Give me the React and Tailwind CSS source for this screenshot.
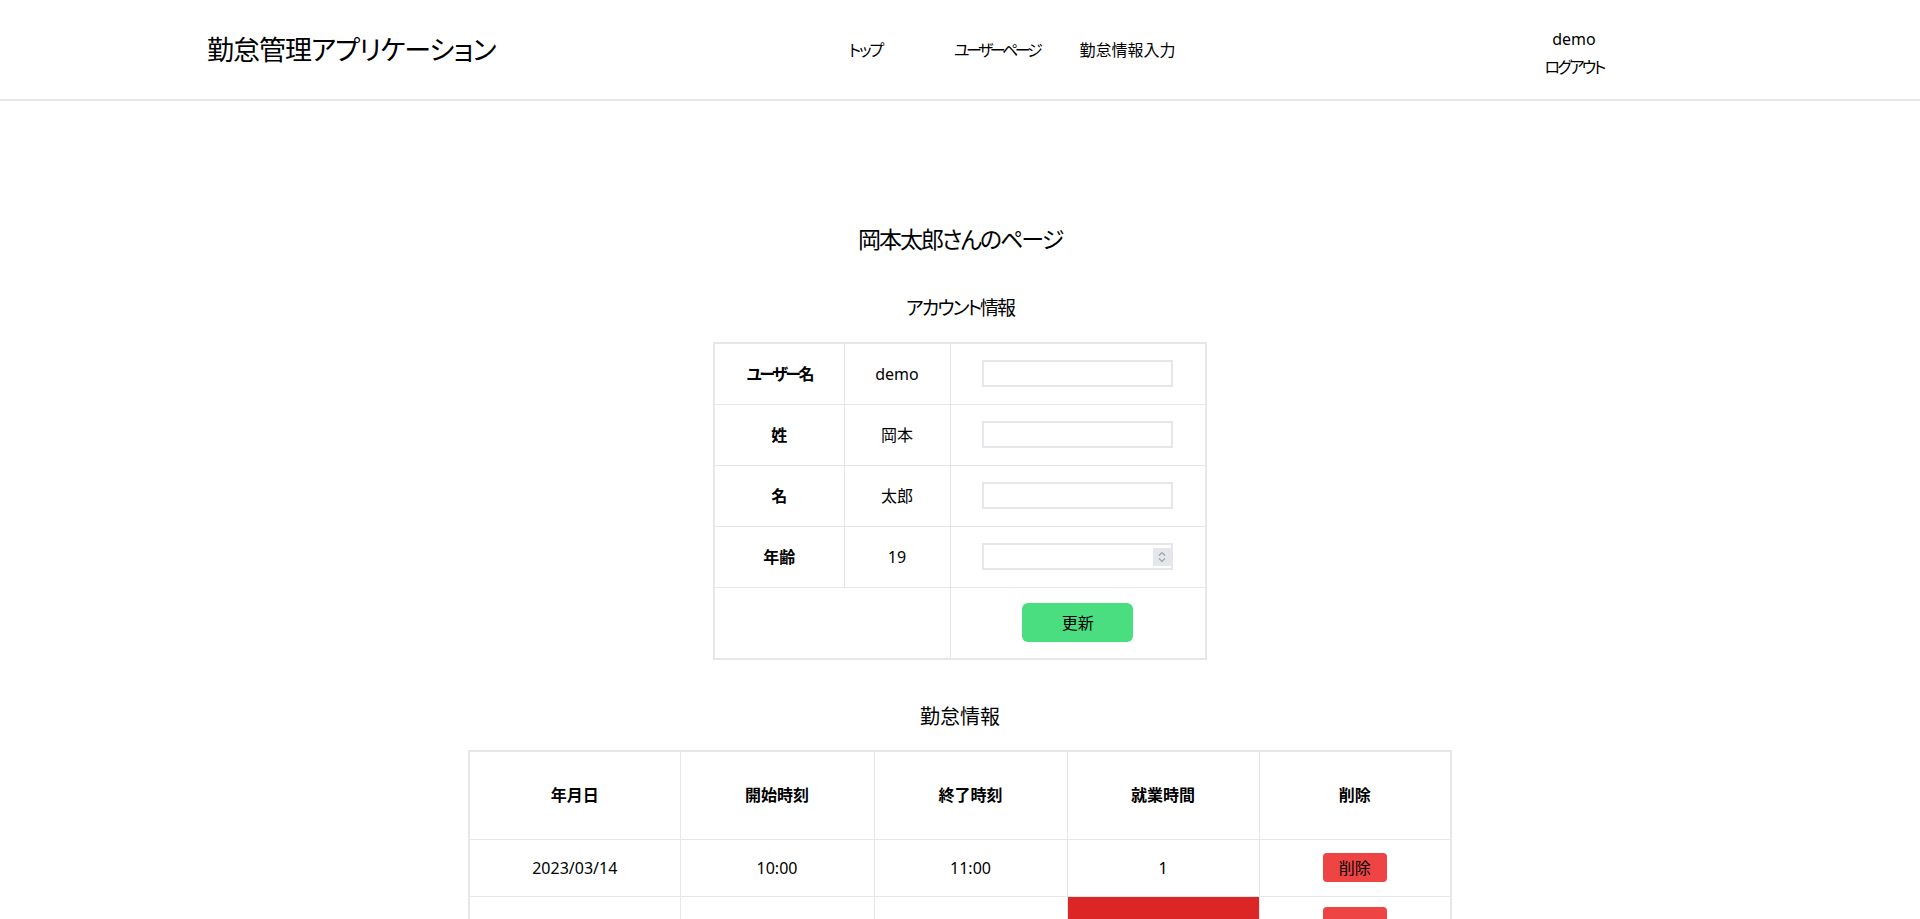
import React from 'react';

const font = "font-['Noto_Sans','Noto_Sans_CJK_JP',sans-serif] [font-feature-settings:'palt']";

const account = [
  { label: "ユーザー名", value: "demo", tight: true },
  { label: "姓", value: "岡本" },
  { label: "名", value: "太郎" },
  { label: "年齢", value: "19", number: true },
];

const records = [
  { date: "2023/03/14", start: "10:00", end: "11:00", hours: "1", over: false },
  { date: "", start: "", end: "", hours: "", over: true },
];

const Header = () => (
  <header className="h-[101px] border-b-2 border-gray-200 flex items-center pl-[207px]">
    <h1 className="w-[593px] text-[27px] tracking-[-1px] leading-none text-black">勤怠管理アプリケーション</h1>
    <nav className="flex w-[393px] text-base text-black">
      <a className="w-[131px] text-center tracking-[-2px]">トップ</a>
      <a className="w-[131px] text-center tracking-[-3.5px]">ユーザーページ</a>
      <a className="w-[131px] text-center">勤怠情報入力</a>
    </nav>
    <div className="ml-[317px] w-32 pt-[6px] text-center text-base leading-7 text-black">
      <div>demo</div>
      <div className="tracking-[-2.5px]">ログアウト</div>
    </div>
  </header>
);

const AccountTable = () => (
  <table className="mt-[20px] w-[494px] border-collapse border-2 border-gray-200 text-base text-black">
    <tbody>
      {account.map((row) => (
        <tr key={row.label} className="h-[61px]">
          <td className={row.tight ? "w-[130px] border border-gray-200 text-center font-bold tracking-[-2.5px]" : "w-[130px] border border-gray-200 text-center font-bold"}>{row.label}</td>
          <td className="w-[106px] border border-gray-200 text-center">{row.value}</td>
          <td className="border border-gray-200">
            <div className="relative mx-auto w-[191px]">
              <input type="text" className="block h-[27px] w-[191px] border-2 border-gray-200 px-1 outline-none" />
              {row.number && (
                <div className="absolute right-[2px] top-[5px] flex h-[18px] w-[18px] flex-col items-center justify-center bg-gray-200 text-gray-400">
                  <svg width="8" height="12" viewBox="0 0 8 12" fill="none" stroke="currentColor" strokeWidth="1.2">
                    <path d="M1 4.5 L4 1.5 L7 4.5" />
                    <path d="M1 7.5 L4 10.5 L7 7.5" />
                  </svg>
                </div>
              )}
            </div>
          </td>
        </tr>
      ))}
      <tr className="h-[72px]">
        <td colSpan={2} className="border border-gray-200"></td>
        <td className="border border-gray-200 text-center">
          <button className="h-[39px] w-[111px] rounded-md bg-[#4ade80] text-base text-black">更新</button>
        </td>
      </tr>
    </tbody>
  </table>
);

const AttendanceTable = () => (
  <table className="mt-[19px] w-[984px] border-collapse border-2 border-gray-200 text-base text-black">
    <thead>
      <tr className="h-[88px]">
        <th className="w-[211px] border border-gray-200 font-bold">年月日</th>
        <th className="w-[194px] border border-gray-200 font-bold">開始時刻</th>
        <th className="w-[193px] border border-gray-200 font-bold">終了時刻</th>
        <th className="w-[192px] border border-gray-200 font-bold">就業時間</th>
        <th className="border border-gray-200 font-bold">削除</th>
      </tr>
    </thead>
    <tbody>
      {records.map((r, i) => (
        <tr key={i} className="h-[57px]">
          <td className="border border-gray-200 text-center">{r.date}</td>
          <td className="border border-gray-200 text-center">{r.start}</td>
          <td className="border border-gray-200 text-center">{r.end}</td>
          <td className={r.over ? "border border-gray-200 bg-[#dc2626] text-center" : "border border-gray-200 text-center"}>{r.hours}</td>
          <td className="border border-gray-200 text-center">
            <button className="h-[29px] w-16 rounded bg-[#ef4444] text-base text-black">{r.over ? "" : "削除"}</button>
          </td>
        </tr>
      ))}
    </tbody>
  </table>
);

export default function App() {
  return (
    <div className={`min-h-screen bg-white ${font}`}>
      <Header />
      <main className="flex flex-col items-center pb-16">
        <h2 className="mt-[122px] text-[23px] tracking-[-2px] leading-8 text-black">岡本太郎さんのページ</h2>
        <h3 className="mt-[39px] text-[19px] tracking-[-2px] leading-7 text-black">アカウント情報</h3>
        <AccountTable />
        <h3 className="mt-[43px] text-xl leading-7 text-black">勤怠情報</h3>
        <AttendanceTable />
      </main>
    </div>
  );
}
